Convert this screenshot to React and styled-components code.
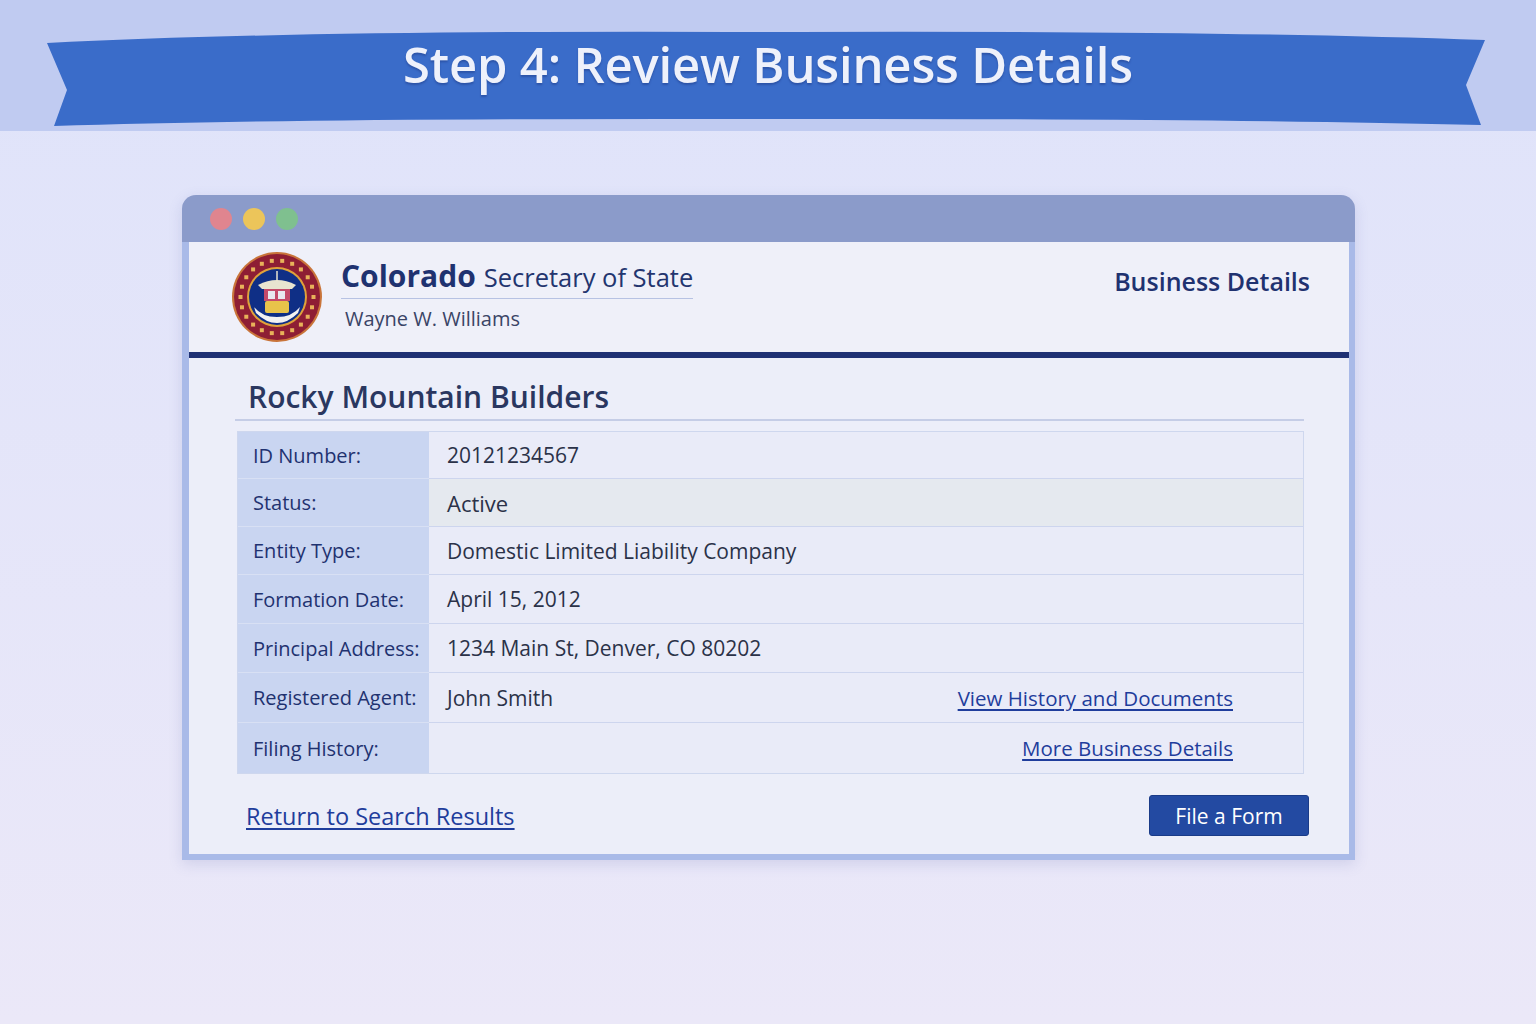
import React from "react";
import styled, { createGlobalStyle } from "styled-components";

const Global = createGlobalStyle`
  html, body { margin: 0; padding: 0; }
  body { font-family: "Open Sans", "Noto Sans", sans-serif; background: #e9e9fa; }
`;

const Page = styled.div`
  width: 1536px; height: 1024px; overflow: hidden;
  background: linear-gradient(#dfe3fa, #ebe8f8);
  display: flex; flex-direction: column; align-items: center;
`;
const TopBand = styled.div`
  width: 100%; height: 131px; background: #c0cbf1;
  position: relative; display: flex; align-items: center; justify-content: center;
`;
const Ribbon = styled.svg`
  position: absolute; left: 0; top: 0;
`;
const Title = styled.h1`
  position: relative; margin: 0; margin-top: -4px;
  color: #eef1fb; font-size: 49px; font-weight: 600; letter-spacing: -0.2px;
  text-shadow: 0 2px 2px rgba(20,40,110,0.35);
`;
const Window = styled.div`
  margin-top: 64px; width: 1173px; margin-left: 1px;
  border-radius: 14px 14px 0 0; background: #8b9bca;
  box-shadow: 0 4px 14px rgba(90,100,170,0.18);
`;
const TitleBar = styled.div`
  height: 47px; display: flex; align-items: center; gap: 11px; padding-left: 28px;
`;
const Dot = styled.span`
  width: 22px; height: 22px; border-radius: 50%; background: ${p => p.c};
`;
const Body = styled.div`
  background: #eceef9; border: 6px solid #a9bae8; border-top: none;
  border-left-width: 7px;
`;
const Header = styled.div`
  height: 110px; display: flex; align-items: center; padding: 0 39px 0 39px;
  border-bottom: 6px solid #1f3174; background: #eff0f9;
`;
const Brand = styled.div`
  display: flex; flex-direction: column; margin-left: 15px; margin-top: -8px;
`;
const BrandLine = styled.div`
  font-size: 22px; color: #1f3270; padding-bottom: 2px; border-bottom: 1.5px solid #b7c2e3;
  b { font-weight: 700; font-size: 30px; margin-right: 8px; }
  span { font-size: 25.5px; color: #23356f; }
`;
const Sub = styled.div`
  font-size: 20px; color: #3a4466; margin: 6px 0 0 4px;
`;
const HeaderRight = styled.div`
  margin-left: auto; font-size: 25px; font-weight: 600; color: #1f3270; margin-top: -32px;
`;
const Content = styled.div`
  padding: 18px 45px 18px 46px;
`;
const Name = styled.h2`
  margin: 0; font-size: 30px; font-weight: 600; color: #2a3760;
  padding: 0 0 2px 13px; border-bottom: 2px solid #c5cde6;
`;
const Table = styled.div`
  margin: 10px 0 0 2px; border: 1.5px solid #ced7ee;
  display: grid; grid-template-columns: 191px 1fr;
`;
const Label = styled.div`
  background: #c9d5f1; color: #1f3270; font-size: 20px;
  height: ${p => p.h}px; display: flex; align-items: center; padding-left: 15px;
  border-bottom: ${p => (p.last ? "none" : "1.5px solid #d8e0f4")};
`;
const Value = styled.div`
  background: ${p => (p.hl ? "#e5e9ef" : "#e9ebf8")}; color: #2b3248; font-size: ${p => (p.big ? 22 : 21)}px;
  height: ${p => p.h}px; display: flex; align-items: center; padding: 0 70px 0 18px;
  border-bottom: ${p => (p.last ? "none" : "1.5px solid #cdd5ee")};
`;
const Link = styled.a`
  color: #1f3d9c; text-decoration: underline; text-underline-offset: 3px; font-size: ${p => p.s || 20.5}px;
  margin-left: auto; cursor: pointer;
`;
const Footer = styled.div`
  display: flex; align-items: center; justify-content: space-between; margin-top: 21px; padding-left: 11px;
`;
const Button = styled.button`
  font-family: inherit; font-size: 21px; color: #fff; background: #234aa2; border: 1px solid #1a3b88;
  border-radius: 3px; width: 160px; height: 41px; margin-right: -5px;
`;

const Seal = () => (
  <svg width="98" height="92" viewBox="0 0 98 92">
    <circle cx="49" cy="46" r="45" fill="#c9743a" />
    <circle cx="49" cy="46" r="43" fill="#8e1e34" />
    <circle cx="49" cy="46" r="30" fill="#e0a23a" />
    <circle cx="49" cy="46" r="28" fill="#0f2f86" />
    {Array.from({ length: 22 }).map((_, i) => {
      const a = (i / 22) * Math.PI * 2;
      return <rect key={i} x={49 + Math.cos(a) * 36.5 - 2} y={46 + Math.sin(a) * 36.5 - 2} width="4" height="4" fill="#e8b25a" />;
    })}
    <path d="M30 34 Q49 24 68 34 L64 38 H34 Z" fill="#e8e4d0" />
    <rect x="36" y="38" width="26" height="12" fill="#c44a6a" />
    <rect x="40" y="40" width="7" height="8" fill="#e8e8f0" />
    <rect x="50" y="40" width="7" height="8" fill="#e8e8f0" />
    <rect x="37" y="50" width="24" height="12" rx="2" fill="#e8c34a" />
    <path d="M26 56 Q34 66 49 66 Q64 66 72 56 L70 62 Q60 72 49 72 Q38 72 28 62 Z" fill="#f2f2f2" />
    <line x1="49" y1="20" x2="49" y2="32" stroke="#e8e4d0" strokeWidth="1.5" />
  </svg>
);

const rows = [
  ["ID Number:", "20121234567", 46],
  ["Status:", "Active", 47, true, true],
  ["Entity Type:", "Domestic Limited Liability Company", 47],
  ["Formation Date:", "April 15, 2012", 48],
  ["Principal Address:", "1234 Main St, Denver, CO 80202", 48],
  ["Registered Agent:", "John Smith", 49, false, false, "View History and Documents"],
  ["Filing History:", "", 50, false, false, "More Business Details"],
];

export default function App() {
  return (
    <Page>
      <Global />
      <TopBand>
        <Ribbon width="1536" height="131" viewBox="0 0 1536 131">
          <path d="M47 43 Q300 30 760 32 Q1200 30 1485 40 L1466 85 L1481 125 Q1200 118 760 119 Q300 118 54 126 L67 90 Z" fill="#3a6cc9" />
        </Ribbon>
        <Title>Step 4: Review Business Details</Title>
      </TopBand>
      <Window>
        <TitleBar>
          <Dot c="#e0858f" /><Dot c="#ecc55a" /><Dot c="#7fc08f" />
        </TitleBar>
        <Body>
          <Header>
            <Seal />
            <Brand>
              <BrandLine><b>Colorado</b><span>Secretary of State</span></BrandLine>
              <Sub>Wayne W. Williams</Sub>
            </Brand>
            <HeaderRight>Business Details</HeaderRight>
          </Header>
          <Content>
            <Name>Rocky Mountain Builders</Name>
            <Table>
              {rows.map(([l, v, h, hl, big, link], i) => (
                <React.Fragment key={l}>
                  <Label h={h} last={i === rows.length - 1}>{l}</Label>
                  <Value h={h} hl={hl} big={big} last={i === rows.length - 1}>
                    {v}
                    {link && <Link>{link}</Link>}
                  </Value>
                </React.Fragment>
              ))}
            </Table>
            <Footer>
              <Link s={23.5} style={{ marginLeft: 0 }}>Return to Search Results</Link>
              <Button>File a Form</Button>
            </Footer>
          </Content>
        </Body>
      </Window>
    </Page>
  );
}
